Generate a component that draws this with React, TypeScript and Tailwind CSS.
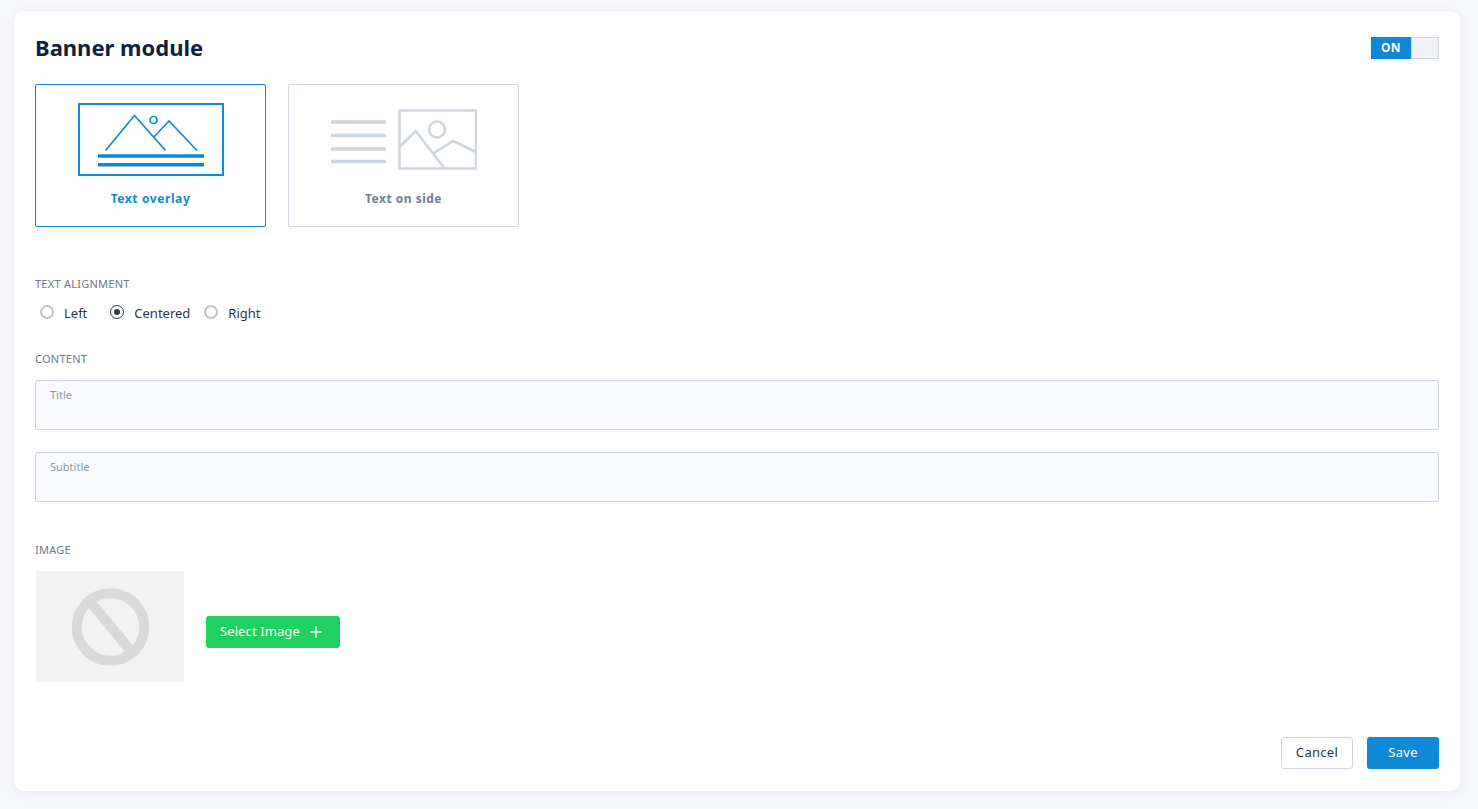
import { Plus } from "lucide-react";

function OverlayIcon() {
  return (
    <svg width="146" height="74" viewBox="78 103 146 74" fill="none" stroke="#0f88d6" className="block">
      <rect x="79" y="104" width="144" height="71" strokeWidth="2" />
      <path d="M105.500 150.500 134.500 115.500 165.500 150.500" strokeWidth="1.700" />
      <path d="M154 137 169 121 197 150.500" strokeWidth="1.700" />
      <circle cx="153.500" cy="120" r="3.500" strokeWidth="1.700" />
      <path d="M98 156H204M98 164.700H204" strokeWidth="3.500" />
    </svg>
  );
}

function SideIcon() {
  return (
    <svg width="146" height="61" viewBox="331 109 146 61" fill="none" stroke="#ced5de" className="block">
      <path d="M331 122H386M331 135.500H386M331 149H386M331 161.500H386" strokeWidth="3.500" />
      <rect x="399.500" y="110.500" width="76.500" height="58" strokeWidth="2.500" />
      <circle cx="437" cy="129.500" r="8" strokeWidth="2.500" />
      <path d="M399.500 147 415.700 131 445 169" strokeWidth="2.500" />
      <path d="M434 153 453 141 476 152" strokeWidth="2.500" />
    </svg>
  );
}

function SectionLabel({ children }: { children: React.ReactNode }) {
  return <div className="text-[11px] leading-[16px] text-[#6b7788] uppercase tracking-[0.25px]">{children}</div>;
}

function Radio({ label, checked }: { label: string; checked?: boolean }) {
  return (
    <label className="flex items-center">
      {checked ? (
        <span className="w-[14px] h-[14px] rounded-full border-[1.5px] border-[#2c3a4e] flex items-center justify-center -mt-[2px]">
          <span className="w-[6px] h-[6px] rounded-full bg-[#2c3a4e]" />
        </span>
      ) : (
        <span className="w-[14px] h-[14px] rounded-full border-2 border-[#bcc3cb] bg-white -mt-[2px]" />
      )}
      <span className="ml-[10px] text-[13px] leading-[18px] text-[#2a374b]">{label}</span>
    </label>
  );
}

function Field({ label }: { label: string }) {
  return (
    <div className="h-[50px] border border-[#ced5de] rounded-[2px] bg-[#f9fbfe] px-[14px] pt-[6px] text-[11px] leading-[15px] text-[#8c96a5]">
      {label}
    </div>
  );
}

export default function App() {
  return (
    <div className="min-h-screen h-[809px] bg-[#f7f8fc] pl-[14px] pr-[18px] pt-[11px] overflow-hidden font-['Noto_Sans',sans-serif]">
      <div className="h-[780px] bg-white rounded-[10px] shadow-[0_2px_12px_rgba(120,135,170,0.12)] px-[21px] pt-[20px] flex flex-col">
        {/* Header */}
        <div className="flex items-center justify-between h-[32px]">
          <h1 className="text-[22px] leading-[32px] font-bold text-[#0f2140]">Banner module</h1>
          <div className="flex h-[22px] w-[68px] mt-[2px]">
            <span className="w-[40px] bg-[#0f88d6] text-white text-[12px] font-bold flex items-center justify-center tracking-[0.3px]">
              ON
            </span>
            <span className="flex-1 bg-[#eff1f3] border border-[#ced5de]" />
          </div>
        </div>

        {/* Layout tiles */}
        <div className="flex gap-[22px] mt-[21px]">
          <div className="w-[231px] h-[143px] border border-[#0f88d6] rounded-[2px] flex flex-col items-center pt-[18px]">
            <OverlayIcon />
            <span className="mt-[13px] text-[12px] leading-[18px] font-bold text-[#0f88d6] tracking-[0.6px]">Text overlay</span>
          </div>
          <div className="w-[231px] h-[143px] border border-[#ced5de] rounded-[2px] flex flex-col items-center pt-[24px]">
            <SideIcon />
            <span className="mt-[20px] text-[12px] leading-[18px] font-bold text-[#707c8e] tracking-[0.5px]">Text on side</span>
          </div>
        </div>

        {/* Alignment */}
        <div className="mt-[49px]">
          <SectionLabel>Text alignment</SectionLabel>
        </div>
        <div className="flex mt-[12px] pl-[5px]">
          <Radio label="Left" />
          <div className="ml-[23px]">
            <Radio label="Centered" checked />
          </div>
          <div className="ml-[14px]">
            <Radio label="Right" />
          </div>
        </div>

        {/* Content */}
        <div className="mt-[29px]">
          <SectionLabel>Content</SectionLabel>
        </div>
        <div className="mt-[13px] flex flex-col gap-[22px]">
          <Field label="Title" />
          <Field label="Subtitle" />
        </div>

        {/* Image */}
        <div className="mt-[40px]">
          <SectionLabel>Image</SectionLabel>
        </div>
        <div className="flex items-start mt-[13px] pl-[1px]">
          <div className="w-[148px] h-[111px] bg-[#f2f2f2] flex items-center justify-center">
            <svg width="80" height="80" viewBox="0 0 80 80" fill="none" stroke="#d9d9d9" strokeWidth="10">
              <circle cx="40.500" cy="40" r="33.800" />
              <path d="M19 13 61.500 65" />
            </svg>
          </div>
          <button className="ml-[22px] mt-[45px] w-[134px] h-[32px] rounded-[3px] bg-[#1fd160] text-white text-[13px] flex items-center pl-[14px] gap-[7px] tracking-[0.1px]">
            Select Image
            <Plus size={18} strokeWidth={2} />
          </button>
        </div>

        {/* Footer */}
        <div className="flex justify-end gap-[14px] mt-[55px]">
          <button className="w-[72px] h-[32px] rounded-[3px] border border-[#ced5de] bg-white text-[13px] text-[#2a374b] tracking-[0.3px]">
            Cancel
          </button>
          <button className="w-[72px] h-[32px] rounded-[3px] bg-[#0f88d6] text-[13px] text-white tracking-[0.3px]">
            Save
          </button>
        </div>
      </div>
    </div>
  );
}
